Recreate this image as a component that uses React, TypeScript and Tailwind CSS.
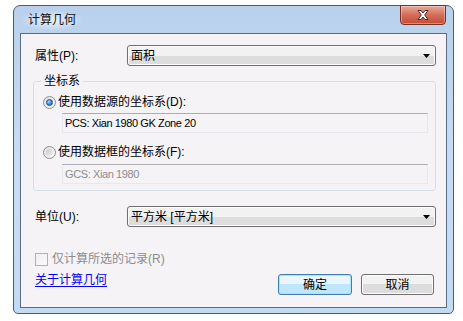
import React from "react";

const ui = "font-['Liberation_Sans','Noto_Sans_CJK_SC',sans-serif]";

const Arrow = () => (
  <svg width="7" height="4" viewBox="0 0 7 4" className="block">
    <path d="M0 0H7L3.5 4Z" fill="#000" />
  </svg>
);

const Combo: React.FC<{ value: string }> = ({ value }) => (
  <div className="flex h-[21px] w-[309px] items-center justify-between rounded-[3px] border border-[#707070] bg-gradient-to-b from-[#f2f2f2] from-50% to-[#dddddd] to-50% pl-[3px] pr-[5px] shadow-[inset_0_0_0_1px_#fcfcfc]">
    <span className="text-[12px] leading-none text-black">{value}</span>
    <Arrow />
  </div>
);

const Radio: React.FC<{ checked?: boolean }> = ({ checked }) => (
  <span className="flex h-[13px] w-[13px] items-center justify-center rounded-full border border-[#8e8f8f] bg-gradient-to-br from-[#e2e2e2] to-[#f7f7f7]">
    {checked ? (
      <span className="h-[7px] w-[7px] rounded-full border border-[#1b4f8c] bg-[radial-gradient(circle_at_35%_35%,#a6dcff,#1d75c4_70%)]" />
    ) : (
      <span className="h-[7px] w-[7px] rounded-full bg-gradient-to-br from-[#c9c9c9] to-[#eeeeee]" />
    )}
  </span>
);

const Field: React.FC<{ text: string; dim?: boolean }> = ({ text, dim }) => (
  <div
    className={`ml-[19px] flex h-[20px] w-[366px] items-center border border-[#e3e9ef] border-t-[#abadb3] pl-[2px] text-[11px] tracking-[-0.4px] ${
      dim ? "text-[#8d8d8d]" : "text-black"
    }`}
  >
    {text}
  </div>
);

export default function App() {
  return (
    <div className={`h-[321px] w-[463px] bg-white pl-[13px] pt-[5px] ${ui}`}>
      <div className="flex h-[309px] w-[441px] flex-col rounded-t-[7px] rounded-b-[5px] border border-[#4f5c6b] bg-gradient-to-b from-[#b9d1ec] via-[#c7dcf4] to-[#c3daf4] px-[6px] pb-[5px]">
        <div className="flex h-[27px] items-start justify-between">
          <div className="mt-[5px] ml-[2px] rounded-full bg-[radial-gradient(ellipse,rgba(255,255,255,0.75),rgba(255,255,255,0)_75%)] px-[6px] py-[2px] text-[12px] leading-[15px] text-[#111]">
            计算几何
          </div>
          <div className="-mt-px mr-[1px] flex h-[20px] w-[46px] items-center justify-center rounded-b-[4px] border border-[#7a2e22] bg-gradient-to-b from-[#e9a99b] via-[#d56c57] to-[#c44b34] shadow-[inset_0_0_0_1px_rgba(255,255,255,0.35)]">
            <svg width="14" height="12" viewBox="0 0 14 12">
              <path
                d="M2 1.5H5L7 4L9 1.5H12L8.7 6L12 10.5H9L7 8L5 10.5H2L5.3 6Z"
                fill="#fff"
                stroke="#4b2a27"
                strokeWidth="1"
                strokeLinejoin="round"
              />
            </svg>
          </div>
        </div>

        <div className="flex flex-1 flex-col border border-[#5e6b7a] bg-[#f5f3f6] text-[12px] leading-[18px] text-black">
          <div className="mt-[11px] flex items-center pl-[14px]">
            <span className="w-[92px] shrink-0 whitespace-nowrap">属性(P):</span>
            <Combo value="面积" />
          </div>

          <fieldset className="mt-[8px] ml-[12px] w-[403px] rounded-[3px] border border-[#d5dfe5] pb-[6px]">
            <legend className="ml-[7px] px-[3px] text-[12px] leading-[14px]">坐标系</legend>
            <div className="mt-[7px] flex h-[14px] items-center gap-[2px] pl-[9px]">
              <Radio checked />
              <span>使用数据源的坐标系(D):</span>
            </div>
            <div className="mt-[4px] pl-[9px]">
              <Field text="PCS: Xian 1980 GK Zone 20" />
            </div>
            <div className="mt-[12px] flex h-[14px] items-center gap-[2px] pl-[9px]">
              <Radio />
              <span>使用数据框的坐标系(F):</span>
            </div>
            <div className="mt-[5px] pl-[9px]">
              <Field text="GCS: Xian 1980" dim />
            </div>
          </fieldset>

          <div className="mt-[15px] flex items-center pl-[14px]">
            <span className="w-[92px] shrink-0 whitespace-nowrap">单位(U):</span>
            <Combo value="平方米 [平方米]" />
          </div>

          <div className="mt-[23px] flex items-center gap-[4px] pl-[14px] text-[#8d8d8d]">
            <span className="h-[13px] w-[13px] border border-[#b1b1b1] bg-gradient-to-br from-[#f0f0f0] to-[#fbfbfb]" />
            <span>仅计算所选的记录(R)</span>
          </div>

          <div className="flex items-start justify-between pl-[14px] pr-[12px]">
            <a className="mt-[3px] text-[#0000ff] underline underline-offset-2">关于计算几何</a>
            <div className="mt-[6px] flex gap-[9px]">
              <button className="h-[21px] w-[74px] rounded-[3px] border border-[#3c7fb1] bg-gradient-to-b from-[#eaf6fd] from-50% to-[#bee6fd] to-50% shadow-[inset_0_0_0_1px_#a8e3f9] text-[12px]">
                确定
              </button>
              <button className="h-[21px] w-[73px] rounded-[3px] border border-[#707070] bg-gradient-to-b from-[#f2f2f2] from-50% to-[#dddddd] to-50% shadow-[inset_0_0_0_1px_#fcfcfc] text-[12px]">
                取消
              </button>
            </div>
          </div>
        </div>
      </div>
    </div>
  );
}
